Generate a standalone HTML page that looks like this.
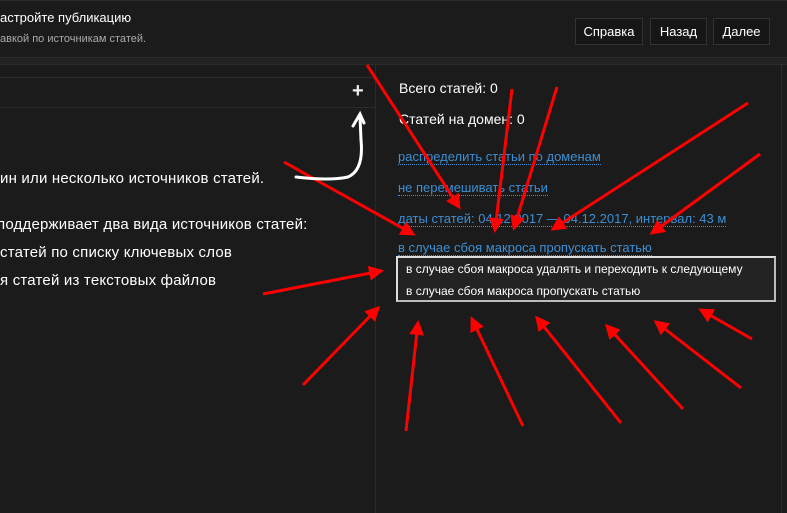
<!DOCTYPE html>
<html><head><meta charset="utf-8"><style>
*{margin:0;padding:0;box-sizing:border-box}
body{width:787px;height:513px;background:#1b1b1b;overflow:hidden;position:relative;font-family:"Segoe UI","Liberation Sans","DejaVu Sans",sans-serif;color:#eee}
.a{position:absolute;white-space:nowrap}
.btn{position:absolute;top:18px;height:27px;border:1px solid #333;background:#161616;color:#fff;font-size:13px;line-height:25px;text-align:center}
.lk{position:absolute;left:398px;color:#3b8fd4;font-size:13px;border-bottom:1px dotted #3b8fd4;line-height:15px;white-space:nowrap}
</style></head><body>
<div class="a" style="left:0;top:0;width:787px;height:1px;background:#2a2a2a"></div>
<div class="a" style="left:0;top:10px;font-size:13px;color:#fff">астройте публикацию</div>
<div class="a" style="left:0;top:33px;font-size:11px;color:#aaa">авкой по источникам статей.</div>
<div class="btn" style="left:575px;width:68px">Справка</div>
<div class="btn" style="left:650px;width:57px">Назад</div>
<div class="btn" style="left:713px;width:57px">Далее</div>
<div class="a" style="left:0;top:57px;width:787px;height:8px;background:#222;border-top:1px solid #2c2c2c;border-bottom:1px solid #2c2c2c"></div>
<div class="a" style="left:781px;top:65px;width:1px;height:448px;background:#2c2c2c"></div>
<div class="a" style="left:375px;top:65px;width:1px;height:448px;background:#2a2a2a"></div>
<div class="a" style="left:0;top:77px;width:375px;height:1px;background:#2c2c2c"></div>
<div class="a" style="left:0;top:107px;width:375px;height:1px;background:#2c2c2c"></div>
<div class="a" style="left:352px;top:80px;font-size:20px;font-weight:bold;color:#eee">+</div>
<div class="a" style="left:0;top:170px;font-size:15px;color:#fff;letter-spacing:0.2px">ин или несколько источников статей.</div>
<div class="a" style="left:-3px;top:216px;font-size:15px;color:#fff;letter-spacing:0.2px">поддерживает два вида источников статей:</div>
<div class="a" style="left:0;top:244px;font-size:15px;color:#fff;letter-spacing:0.2px">статей по списку ключевых слов</div>
<div class="a" style="left:0;top:272px;font-size:15px;color:#fff;letter-spacing:0.2px">я статей из текстовых файлов</div>
<div class="a" style="left:399px;top:80px;font-size:14px;color:#fff">Всего статей: 0</div>
<div class="a" style="left:399px;top:111px;font-size:14px;color:#fff">Статей на домен: 0</div>
<div class="lk" style="top:149px">распределить статьи по доменам</div>
<div class="lk" style="top:180px">не перемешивать статьи</div>
<div class="lk" style="top:211px">даты статей: 04.12.2017 — 04.12.2017, интервал: 43 м</div>
<div class="lk" style="top:240px">в случае сбоя макроса пропускать статью</div>
<div class="a" style="left:396px;top:256px;width:380px;height:46px;background:#232323;border:2px solid #bbb;border-top-color:#ddd;border-left-color:#ddd"></div>
<div class="a" style="left:406px;top:262px;font-size:12px;color:#fff">в случае сбоя макроса удалять и переходить к следующему</div>
<div class="a" style="left:406px;top:284px;font-size:12px;color:#fff">в случае сбоя макроса пропускать статью</div>
<svg class="a" style="left:0;top:0" width="787" height="513">
<defs><marker id="h" viewBox="0 0 10 10" refX="8" refY="5" markerWidth="5" markerHeight="5" orient="auto"><path d="M0 0L10 5L0 10z" fill="#f00"/></marker></defs>
<g stroke="#f00" stroke-width="3" marker-end="url(#h)" fill="none">
<line x1="367" y1="65" x2="459" y2="207"/>
<line x1="512" y1="89" x2="495" y2="230"/>
<line x1="557" y1="87" x2="514" y2="228"/>
<line x1="748" y1="103" x2="553" y2="229"/>
<line x1="760" y1="154" x2="652" y2="233"/>
<line x1="284" y1="162" x2="413" y2="234"/>
<line x1="263" y1="294" x2="381" y2="271"/>
<line x1="303" y1="385" x2="378" y2="308"/>
<line x1="406" y1="431" x2="418" y2="323"/>
<line x1="523" y1="426" x2="472" y2="319"/>
<line x1="621" y1="423" x2="537" y2="318"/>
<line x1="683" y1="409" x2="607" y2="326"/>
<line x1="741" y1="388" x2="656" y2="322"/>
<line x1="752" y1="339" x2="701" y2="310"/>
</g>
<g stroke="#fff" stroke-width="3" fill="none" stroke-linecap="round">
<path d="M296 177 Q330 181 348 177 Q364 170 361 140 L360 116"/>
<path d="M353 126 L360 114 L364 123"/>
</g>
</svg>
</body></html>
